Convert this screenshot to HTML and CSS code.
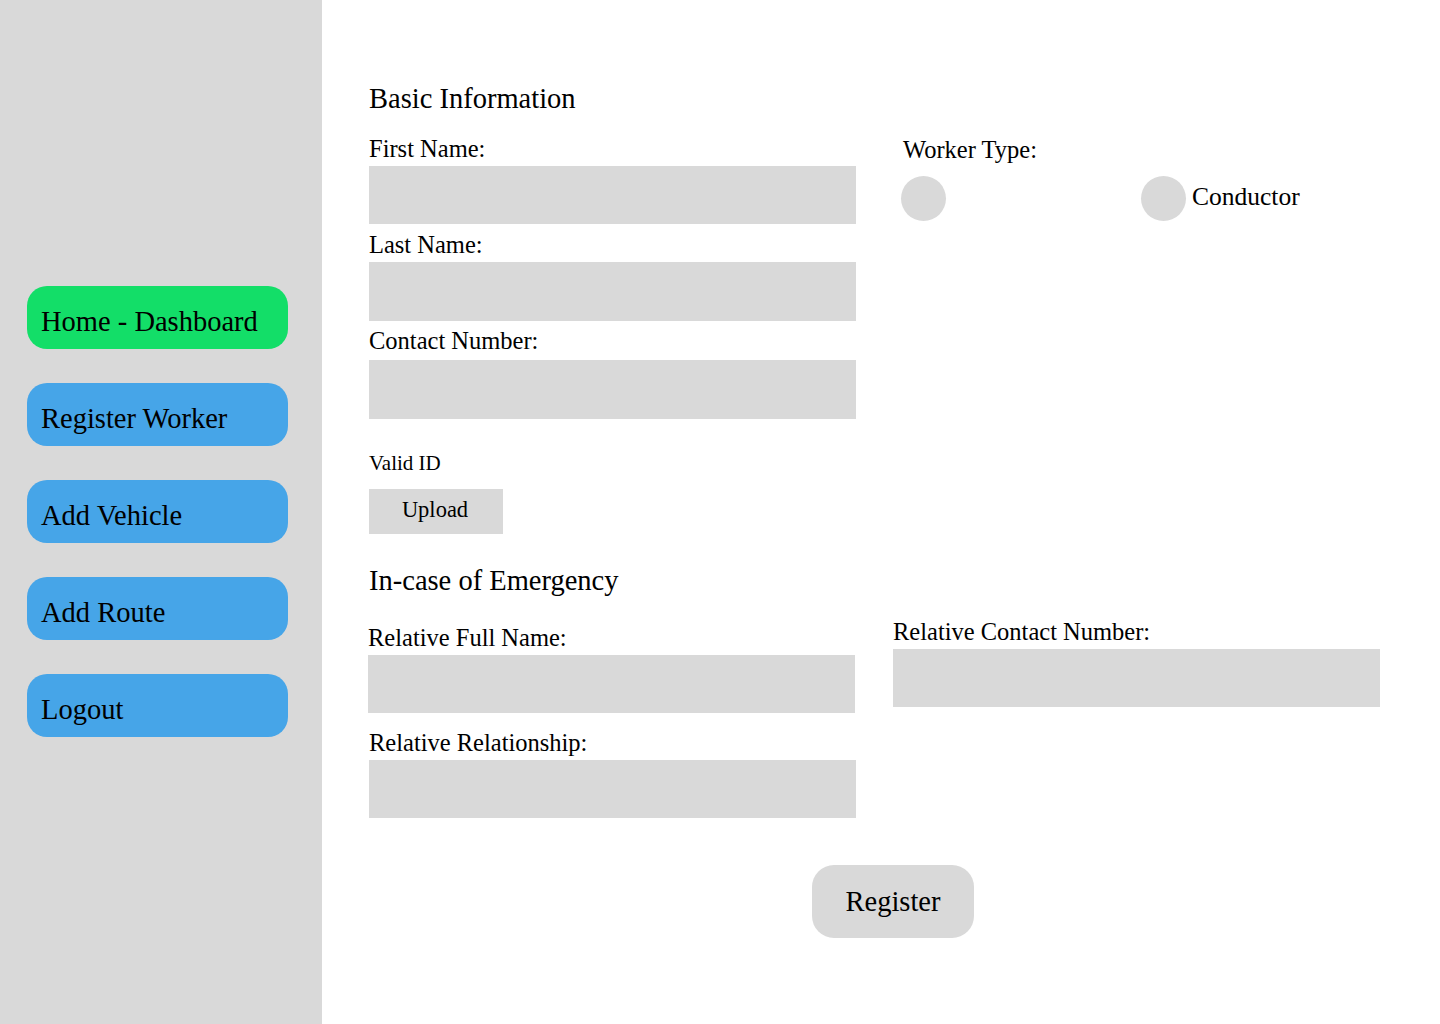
FILE: index.html
```html
<!DOCTYPE html>
<html lang="en">
<head>
<meta charset="utf-8">
<title>Register Worker</title>
<link rel="stylesheet" href="styles.css">
</head>
<body>
<div class="app">
  <aside class="sidebar">
    <nav class="nav">
      <a class="nav-btn nav-active" href="#">Home - Dashboard</a>
      <a class="nav-btn" href="#">Register Worker</a>
      <a class="nav-btn" href="#">Add Vehicle</a>
      <a class="nav-btn" href="#">Add Route</a>
      <a class="nav-btn" href="#">Logout</a>
    </nav>
  </aside>
  <main class="main">
    <h2 class="heading">Basic Information</h2>
    <div class="basic">
      <div class="col-left">
        <label class="label lbl-first">First Name:</label>
        <div class="input in-first"></div>
        <label class="label lbl-last">Last Name:</label>
        <div class="input in-last"></div>
        <label class="label lbl-contact">Contact Number:</label>
        <div class="input in-contact"></div>
      </div>
      <div class="col-right">
        <label class="label">Worker Type:</label>
        <div class="radios">
          <div class="radio-item radio-first"><span class="radio"></span></div>
          <div class="radio-item"><span class="radio"></span><span class="radio-text">Conductor</span></div>
        </div>
      </div>
    </div>
    <div class="upload-block">
      <div class="small-label">Valid ID</div>
      <div class="upload-btn">Upload</div>
    </div>
    <h2 class="heading heading-emergency">In-case of Emergency</h2>
    <div class="emergency">
      <div class="em-left">
        <label class="label">Relative Full Name:</label>
        <div class="input in-rel"></div>
      </div>
      <div class="em-right">
        <label class="label">Relative Contact Number:</label>
        <div class="input in-rel"></div>
      </div>
    </div>
    <div class="relationship">
      <label class="label">Relative Relationship:</label>
      <div class="input in-rel"></div>
    </div>
    <div class="actions">
      <div class="register-btn">Register</div>
    </div>
  </main>
</div>
</body>
</html>
```
FILE: styles.css
```css
* { box-sizing: border-box; }
html, body { margin: 0; padding: 0; }
body {
  font-family: "Liberation Serif", "Times New Roman", serif;
  color: #000;
  background: #fff;
}
.app {
  display: flex;
  min-height: 1024px;
}
.sidebar {
  width: 322px;
  flex-shrink: 0;
  background: #d9d9d9;
  padding-top: 286px;
}
.nav {
  display: flex;
  flex-direction: column;
  gap: 34px;
  padding-left: 27px;
}
.nav-btn {
  display: flex;
  align-items: center;
  width: 261px;
  height: 63px;
  padding-left: 14px;
  padding-top: 8px;
  border-radius: 20px;
  background: #46a5e8;
  color: #000;
  text-decoration: none;
  font-size: 28.5px;
}
.nav-active { background: #13de68; }

.main {
  flex: 1;
  padding: 81px 0 0 47px;
}
.heading {
  margin: 0;
  font-weight: normal;
  font-size: 28.5px;
  line-height: 34px;
  padding-top: 1px;
}
.label {
  display: block;
  font-size: 24.5px;
  line-height: 28px;
}
.input {
  background: #d9d9d9;
  width: 487px;
  height: 58px;
}
.basic {
  display: flex;
  gap: 47px;
  margin-top: 19px;
}
.col-left { display: flex; flex-direction: column; }
.lbl-first { margin-bottom: 3px; }
.lbl-last { margin-top: 7px; margin-bottom: 3px; }
.in-last { height: 59px; }
.lbl-contact { margin-top: 6px; margin-bottom: 5px; }
.in-contact { height: 59px; }

.col-right { display: flex; flex-direction: column; padding-top: 1px; }
.radios {
  display: flex;
  margin-top: 12px;
  margin-left: -2px;
}
.radio-item {
  display: flex;
  align-items: center;
  gap: 6px;
}
.radio-first { width: 240px; }
.radio {
  display: block;
  width: 45px;
  height: 45px;
  border-radius: 50%;
  background: #d9d9d9;
}
.radio-text {
  font-size: 25.5px;
  line-height: 28px;
  padding-bottom: 4px;
}

.upload-block { margin-top: 32px; }
.small-label {
  font-size: 21px;
  line-height: 24px;
}
.upload-btn {
  margin-top: 14px;
  width: 134px;
  height: 45px;
  background: #d9d9d9;
  display: flex;
  align-items: center;
  justify-content: center;
  font-size: 22.5px;
  padding-bottom: 4px;
  padding-right: 2px;
}
.heading-emergency { margin-top: 29px; }

.emergency {
  display: flex;
  align-items: flex-start;
  gap: 38px;
  margin-top: 20px;
  margin-left: -1px;
}
.em-left { padding-top: 6px; }
.em-left .label, .em-right .label { margin-bottom: 3px; }
.relationship { margin-top: 16px; }
.relationship .label { margin-bottom: 3px; }

.actions {
  margin-top: 47px;
  padding-left: 443px;
}
.register-btn {
  width: 162px;
  height: 73px;
  border-radius: 22px;
  background: #d9d9d9;
  display: flex;
  align-items: center;
  justify-content: center;
  font-size: 28.5px;
}
```
